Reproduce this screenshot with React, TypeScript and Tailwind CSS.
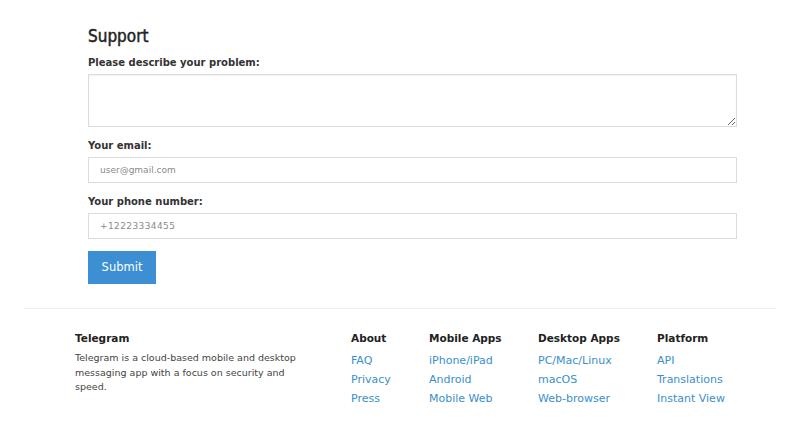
import React from "react";

const font = { fontFamily: '"DejaVu Sans", "Open Sans", sans-serif' };

function Col({ title, links }: { title: string; links: string[] }) {
  return (
    <div className="flex flex-col">
      <div className="text-[10.5px] font-bold text-[#222] leading-[18px] mb-[4px]">{title}</div>
      {links.map((l) => (
        <a key={l} className="text-[11px] text-[#3a8fcc] leading-[19px]">{l}</a>
      ))}
    </div>
  );
}

export default function App() {
  return (
    <div className="w-[800px] h-[440px] bg-white overflow-hidden" style={font}>
      <div className="pl-[88px] pr-[63px] pt-[24px]">
        <h1
          className="text-[17px] text-[#222] leading-[24px] [-webkit-text-stroke:0.45px_#222]"
          style={{ fontFamily: '"DejaVu Sans Condensed", "DejaVu Sans", sans-serif' }}
        >
          Support
        </h1>
        <div className="text-[10px] font-bold text-[#333] mt-[8px] leading-[14px]">Please describe your problem:</div>
        <textarea className="mt-[4px] block w-full h-[53px] border border-[#dcdcdc] shadow-[inset_0_1px_2px_rgba(0,0,0,0.06)] resize-y outline-none" />
        <div className="text-[10px] font-bold text-[#333] mt-[12px] leading-[14px]">Your email:</div>
        <input
          className="mt-[4px] block w-full h-[26px] border border-[#dcdcdc] px-[11px] text-[9px] text-[#888] placeholder:text-[#8a8a8a] outline-none"
          placeholder="user@gmail.com"
        />
        <div className="text-[10px] font-bold text-[#333] mt-[12px] leading-[14px]">Your phone number:</div>
        <input
          className="mt-[4px] block w-full h-[26px] border border-[#dcdcdc] px-[11px] text-[9px] text-[#888] placeholder:text-[#8a8a8a] outline-none tracking-[0.4px]"
          placeholder="+12223334455"
        />
        <button className="mt-[12px] h-[33px] w-[68px] bg-[#3d8fd4] text-white text-[11.5px] leading-none">Submit</button>
      </div>
      <div className="mx-[24px] mt-[24px] border-t border-[#efefef]" />
      <div className="flex pl-[75px] pt-[20px]">
        <div className="w-[276px] flex flex-col">
          <div className="text-[10.5px] font-bold text-[#222] leading-[18px] mb-[4px]">Telegram</div>
          <p className="text-[9.5px] text-[#444] leading-[14.5px] w-[232px]">
            Telegram is a cloud-based mobile and desktop messaging app with a focus on security and speed.
          </p>
        </div>
        <div className="w-[78px]">
          <Col title="About" links={["FAQ", "Privacy", "Press"]} />
        </div>
        <div className="w-[109px]">
          <Col title="Mobile Apps" links={["iPhone/iPad", "Android", "Mobile Web"]} />
        </div>
        <div className="w-[119px]">
          <Col title="Desktop Apps" links={["PC/Mac/Linux", "macOS", "Web-browser"]} />
        </div>
        <div>
          <Col title="Platform" links={["API", "Translations", "Instant View"]} />
        </div>
      </div>
    </div>
  );
}
